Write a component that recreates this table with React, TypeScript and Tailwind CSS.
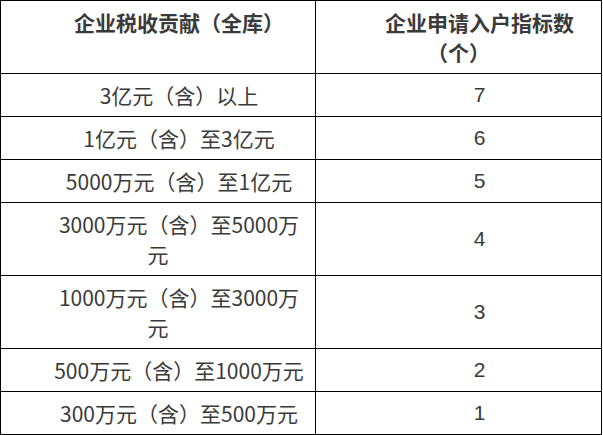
import React from "react";

const rows: [string, string, boolean][] = [
  ["3亿元（含）以上", "7", false],
  ["1亿元（含）至3亿元", "6", false],
  ["5000万元（含）至1亿元", "5", false],
  ["3000万元（含）至5000万元", "4", true],
  ["1000万元（含）至3000万元", "3", true],
  ["500万元（含）至1000万元", "2", false],
  ["300万元（含）至500万元", "1", false],
];

export default function App() {
  return (
    <div className="bg-white w-[603px] h-[435px] overflow-hidden" style={{ fontFamily: '"Noto Sans CJK SC", "Liberation Sans", sans-serif' }}>
      <table className="border-collapse table-fixed w-[602px] text-[21px] leading-[30px] text-[#3a3a3a]">
        <colgroup>
          <col className="w-[315px]" />
          <col />
        </colgroup>
        <thead>
          <tr>
            <th className="border border-black px-[10px] py-[6px] align-top text-center font-bold indent-[2em]">
              企业税收贡献（全库）
            </th>
            <th className="border border-black px-[10px] py-[6px] align-top text-center font-bold indent-[2em]">
              企业申请入户指标数（个）
            </th>
          </tr>
        </thead>
        <tbody>
          {rows.map(([a, b]) => (
            <tr key={a}>
              <td className="border border-black px-[10px] py-[6px] align-middle text-center indent-[2em]">{a}</td>
              <td className="border border-black px-[10px] py-[6px] align-middle text-center indent-[2em] font-['Liberation_Sans',sans-serif]">
                {b}
              </td>
            </tr>
          ))}
        </tbody>
      </table>
    </div>
  );
}
